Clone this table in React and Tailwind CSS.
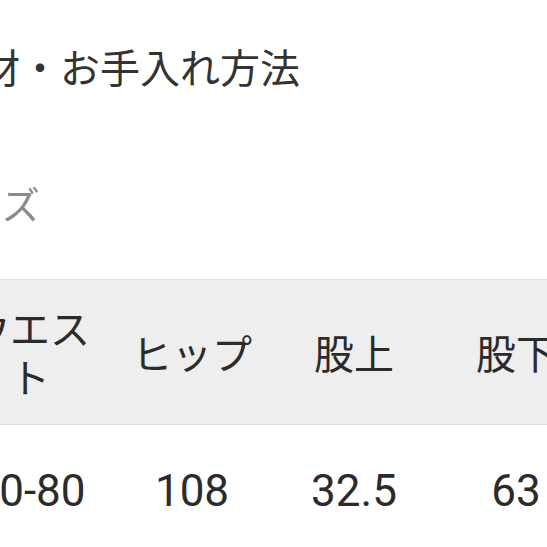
import React from "react";

const jp = { fontFamily: '"Noto Sans CJK JP", "Noto Sans", sans-serif' };
const num = { fontFamily: 'Roboto, "Noto Sans", sans-serif' };

const sizes = [
  { label: "ウエスト", value: "70-80" },
  { label: "ヒップ", value: "108" },
  { label: "股上", value: "32.5" },
  { label: "股下", value: "63" },
];

const App = () => {
  return (
    <div className="w-[547px] h-[547px] overflow-hidden bg-white text-[#333333]">
      {/* 素材・お手入れ方法 */}
      <div className="ml-[-60px] pt-[46px]">
        <h2 className="text-[40px] leading-none font-normal whitespace-nowrap" style={jp}>
          素材・お手入れ方法
        </h2>
      </div>

      {/* サイズ */}
      <div className="ml-[-73px] mt-[98px]">
        <h3 className="text-[38px] leading-none font-normal text-[#8a8a8a] whitespace-nowrap" style={jp}>
          サイズ
        </h3>
      </div>

      {/* Size table */}
      <div className="mt-[57px]">
        <div className="bg-[#eeeeee] border-t border-b border-t-[#e2e2e2] border-b-[#d9d9d9]">
          <div className="ml-[-51px] flex h-[144px] items-center">
            {sizes.map((s) => (
              <div
                key={s.label}
                className="w-[162px] shrink-0 px-[12px] text-center text-[40px] leading-[49px] text-[#2b2b2b]"
                style={jp}
              >
                {s.label}
              </div>
            ))}
          </div>
        </div>
        <div className="ml-[-51px] flex pt-[44px]">
          {sizes.map((s) => (
            <div
              key={s.label}
              className="w-[162px] shrink-0 text-center text-[44px] leading-none text-[#2b2b2b]"
              style={num}
            >
              {s.value}
            </div>
          ))}
        </div>
      </div>
    </div>
  );
};

export default App;
